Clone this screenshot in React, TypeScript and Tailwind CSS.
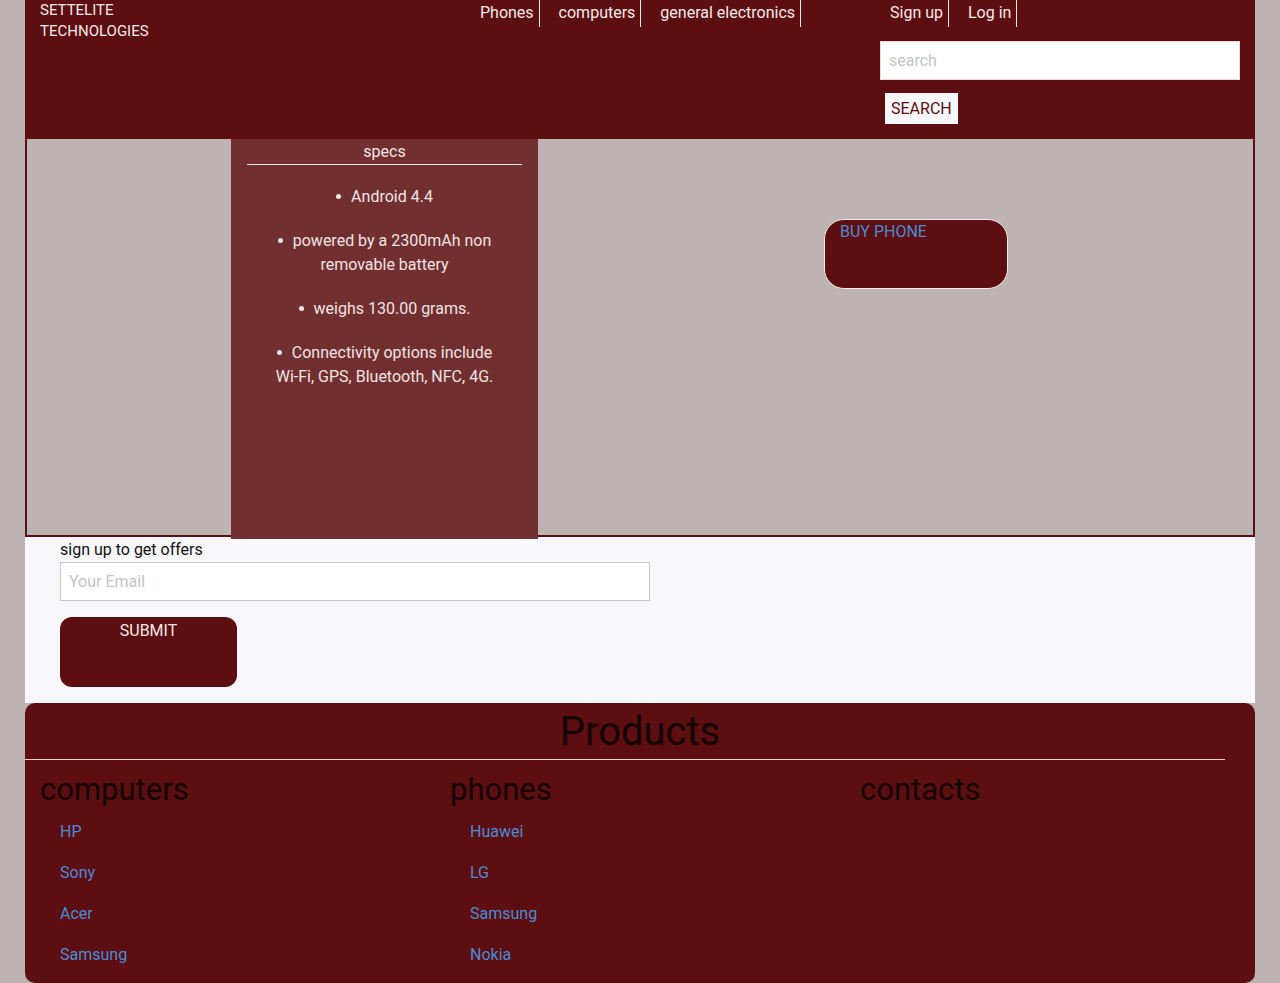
import React from "react";

const F = { fontFamily: "Roboto, 'Liberation Sans', sans-serif" };

export default function App() {
  const navLeft = ["Phones", "computers", "general electronics"];
  const specs = [
    "Android 4.4",
    "powered by a 2300mAh non removable battery",
    "weighs 130.00 grams.",
    "Connectivity options include Wi-Fi, GPS, Bluetooth, NFC, 4G.",
  ];
  const computers = ["HP", "Sony", "Acer", "Samsung"];
  const phones = ["Huawei", "LG", "Samsung", "Nokia"];
  return (
    <div className="min-h-screen bg-[#bdb3b2] px-[25px]" style={F}>
      {/* header */}
      <header className="h-[139px] bg-[#5c0e10] flex pl-[15px] text-[#f4eaea]">
        <div className="w-[420px] shrink-0 text-[15px] leading-[21px] uppercase">
          <div>Settelite</div>
          <div>Technologies</div>
        </div>
        <nav className="w-[420px] shrink-0 flex h-[27px] text-[16px] leading-[24px]">
          {navLeft.map((n, i) => (
            <a
              key={n}
              className={
                i === 0
                  ? "h-[27px] pt-[1px] pl-[20px] pr-[5px] border-r border-[#f4eaea]"
                  : "h-[27px] pt-[1px] pl-[19px] pr-[5px] border-r border-[#f4eaea]"
              }
            >
              {n}
            </a>
          ))}
        </nav>
        <div className="w-[360px] shrink-0 flex flex-col">
          <div className="flex h-[27px] text-[16px] leading-[24px]">
            <a className="h-[27px] pt-[1px] pl-[10px] pr-[5px] border-r border-[#f4eaea]">Sign up</a>
            <a className="h-[27px] pt-[1px] pl-[19px] pr-[5px] border-r border-[#f4eaea]">Log in</a>
          </div>
          <input
            placeholder="search"
            className="mt-[14px] h-[39px] w-[360px] bg-white border border-[#e8d8d8] px-[8px] text-[16px] placeholder:text-[#c4c4c4] outline-none"
          />
          <div className="mt-[13px] ml-[5px]">
            <button className="h-[31px] px-[6px] bg-[#f8f8fc] text-[#5c0e10] text-[16px] uppercase">
              Search
            </button>
          </div>
        </div>
      </header>

      {/* main */}
      <section className="h-[398px] border-x-2 border-b-2 border-[#5c0e10] flex">
        <div className="w-[204px] shrink-0" />
        <div className="w-[307px] h-[400px] shrink-0 bg-[#722f30] text-[#f0e4e4] text-[16px] leading-[24px] text-center">
          <div className="pt-[1px]">specs</div>
          <div className="mx-[16px] border-t border-[#f0e4e4]" />
          <ul className="list-none px-[40px] mt-[20px] flex flex-col gap-[20px]">
            {specs.map((s) => (
              <li key={s}>
                <span className="inline-block w-[5px] h-[5px] rounded-full bg-[#f0e4e4] mr-[10px] align-middle mb-[3px]" />
                {s}
              </li>
            ))}
          </ul>
        </div>
        <div className="pl-[286px] pt-[80px]">
          <button className="w-[184px] h-[70px] rounded-[20px] border border-[#f4eaea] bg-[#5c0e10] text-left px-[15px] text-[16px] leading-[24px] text-[#4a8cd6] flex items-start">
            <span>BUY PHONE</span>
          </button>
        </div>
      </section>

      {/* signup */}
      <section className="h-[166px] bg-[#f8f8fc] pl-[35px] pt-[1px]">
        <div className="text-[16px] leading-[24px] text-[#111]">sign up to get offers</div>
        <input
          placeholder="Your Email"
          className="block w-[590px] h-[39px] bg-white border border-[#c8c8cc] px-[8px] text-[16px] placeholder:text-[#c4c4c4] outline-none"
        />
        <button className="mt-[16px] w-[177px] h-[70px] rounded-[12px] bg-[#5c0e10] text-[#f4eaea] text-[16px] leading-[24px] flex justify-center items-start pt-[2px]">
          SUBMIT
        </button>
      </section>

      {/* footer */}
      <footer className="h-[280px] bg-[#5c0e10] rounded-[10px] text-[#150405]">
        <h2 className="text-center text-[40px] leading-[54px] pt-[2px]">Products</h2>
        <div className="w-[1200px] border-t border-[#e6d4d4]" />
        <div className="flex pl-[15px]">
          {[
            { t: "computers", items: computers },
            { t: "phones", items: phones },
            { t: "contacts", items: [] as string[] },
          ].map((c) => (
            <div key={c.t} className="w-[410px] shrink-0">
              <h3 className="text-[31px] leading-[58px] pt-[1px]">{c.t}</h3>
              <ul className="pl-[20px] pt-[1px] flex flex-col gap-[17px]">
                {c.items.map((i) => (
                  <li key={i} className="text-[16px] leading-[24px] text-[#4a8cd6]">
                    {i}
                  </li>
                ))}
              </ul>
            </div>
          ))}
        </div>
      </footer>
    </div>
  );
}
